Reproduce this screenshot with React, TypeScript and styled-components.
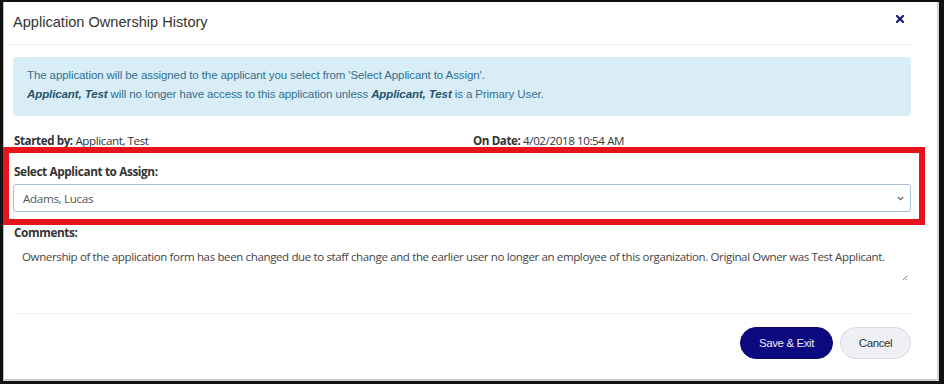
import styled, { createGlobalStyle } from 'styled-components';

const GlobalStyle = createGlobalStyle`
  html, body {
    margin: 0;
    padding: 0;
    background: #ffffff;
  }
  body {
    font-family: "Liberation Sans", Arial, sans-serif;
    color: #333333;
  }
`;

const Frame = styled.div`
  position: relative;
  box-sizing: border-box;
  width: 944px;
  height: 384px;
  border-style: solid;
  border-color: #111111;
  border-width: 2px 5px 3px 3px;
  background: #ffffff;
  box-shadow: inset 1px 0 0 #bdbdbd, inset -2px 0 0 #d6d6d6, inset 0 -2px 0 #cfcfcf;
  overflow: hidden;
`;

const Dialog = styled.div`
  margin-left: 5px;
  width: 904px;
  display: flex;
  flex-direction: column;
`;

const Header = styled.div`
  height: 42px;
  display: flex;
  align-items: center;
  justify-content: space-between;
  padding: 0 5px;
  border-bottom: 1px solid #ececec;
`;

const Title = styled.h4`
  margin: 0;
  font-size: 14.6px;
  font-weight: 400;
  color: #333333;
  position: relative;
  top: -1px;
`;

const CloseButton = styled.button`
  border: 0;
  background: none;
  padding: 0;
  margin-right: 3px;
  width: 8px;
  height: 8px;
  display: flex;
  position: relative;
  top: -4px;
`;

const Body = styled.div`
  padding: 0 1px 0 5px;
`;

const Alert = styled.div`
  margin-top: 12px;
  height: 59px;
  box-sizing: border-box;
  padding: 9px 14px 0;
  background: #d9edf7;
  border-radius: 4px;
  color: #31708f;
  font-size: 11.5px;
  line-height: 19px;
  letter-spacing: -0.1px;
  b {
    font-style: italic;
    font-weight: 700;
    color: #245269;
  }
`;

const MetaRow = styled.div`
  margin-top: 17px;
  display: grid;
  grid-template-columns: 459px 1fr;
  padding-left: 1px;
  font-family: "Open Sans", "Liberation Sans", sans-serif;
  font-size: 11.6px;
  line-height: 16px;
  letter-spacing: -0.4px;
  color: #333333;
  b {
    font-weight: 700;
  }
`;

const Label = styled.div<{ $gap?: number }>`
  margin-top: ${(p) => p.$gap ?? 14}px;
  padding-left: 1px;
  font-family: "Open Sans", "Liberation Sans", sans-serif;
  font-size: 11.8px;
  line-height: 16px;
  font-weight: 700;
  letter-spacing: -0.4px;
  color: #333333;
`;

const SelectBox = styled.div`
  margin-top: 5px;
  height: 28px;
  box-sizing: border-box;
  border: 1px solid #a9bdd1;
  border-radius: 3px;
  display: flex;
  align-items: center;
  justify-content: space-between;
  padding: 0 6px 0 9px;
  font-family: "Open Sans", "Liberation Sans", sans-serif;
  font-size: 11.6px;
  letter-spacing: -0.3px;
  color: #555555;
`;

const Comments = styled.div`
  position: relative;
  height: 51px;
  box-sizing: border-box;
  padding: 9px 0 0 9px;
  font-family: "Open Sans", "Liberation Sans", sans-serif;
  font-size: 11.5px;
  line-height: 16px;
  letter-spacing: -0.36px;
  color: #444444;
  white-space: nowrap;
`;

const Resize = styled.svg`
  position: absolute;
  right: 3px;
  bottom: 10px;
`;

const Footer = styled.div`
  margin: 22px 0 0 7px;
  border-top: 1px solid #ededed;
  padding: 13px 1px 0 0;
  display: flex;
  justify-content: flex-end;
  gap: 7px;
`;

const Button = styled.button<{ $primary?: boolean }>`
  height: 32px;
  border-radius: 16px;
  padding: 0;
  width: ${(p) => (p.$primary ? '93px' : '71px')};
  font-family: "Liberation Sans", Arial, sans-serif;
  font-size: 11.5px;
  letter-spacing: -0.4px;
  border: 1px solid ${(p) => (p.$primary ? '#0b0870' : '#d7dade')};
  background: ${(p) => (p.$primary ? '#0c0880' : '#eef0f3')};
  color: ${(p) => (p.$primary ? '#e8e8f5' : '#333333')};
`;

const Highlight = styled.div`
  position: absolute;
  left: 0;
  top: 145px;
  width: 922px;
  height: 78px;
  box-sizing: border-box;
  border: 6px solid #e8141c;
  pointer-events: none;
`;

export default function App() {
  return (
    <>
      <GlobalStyle />
      <Frame>
        <Dialog>
          <Header>
            <Title>Application Ownership History</Title>
            <CloseButton aria-label="close">
              <svg width="8" height="8" viewBox="0 0 8 8">
                <path d="M1 1 L7 7 M7 1 L1 7" stroke="#1b1a82" strokeWidth="2.2" strokeLinecap="square" />
              </svg>
            </CloseButton>
          </Header>
          <Body>
            <Alert>
              The application will be assigned to the applicant you select from 'Select Applicant to Assign'.
              <br />
              <b>Applicant, Test</b> will no longer have access to this application unless <b>Applicant, Test</b> is a
              Primary User.
            </Alert>
            <MetaRow>
              <span>
                <b>Started by:</b> Applicant, Test
              </span>
              <span>
                <b>On Date:</b> 4/02/2018 10:54 AM
              </span>
            </MetaRow>
            <Label>Select Applicant to Assign:</Label>
            <SelectBox>
              <span>Adams, Lucas</span>
              <svg width="7" height="5" viewBox="0 0 7 5">
                <path d="M0.8 1 L3.5 3.7 L6.2 1" fill="none" stroke="#666" strokeWidth="1.2" />
              </svg>
            </SelectBox>
            <Label $gap={12}>Comments:</Label>
            <Comments>
              Ownership of the application form has been changed due to staff change and the earlier user no longer an
              employee of this organization. Original Owner was Test Applicant.
              <Resize width="6" height="6" viewBox="0 0 6 6">
                <path d="M1 5 L5 1 M3.5 5 L5 3.5" stroke="#777" strokeWidth="0.9" />
              </Resize>
            </Comments>
          </Body>
          <Footer>
            <Button $primary>Save &amp; Exit</Button>
            <Button>Cancel</Button>
          </Footer>
        </Dialog>
        <Highlight />
      </Frame>
    </>
  );
}
